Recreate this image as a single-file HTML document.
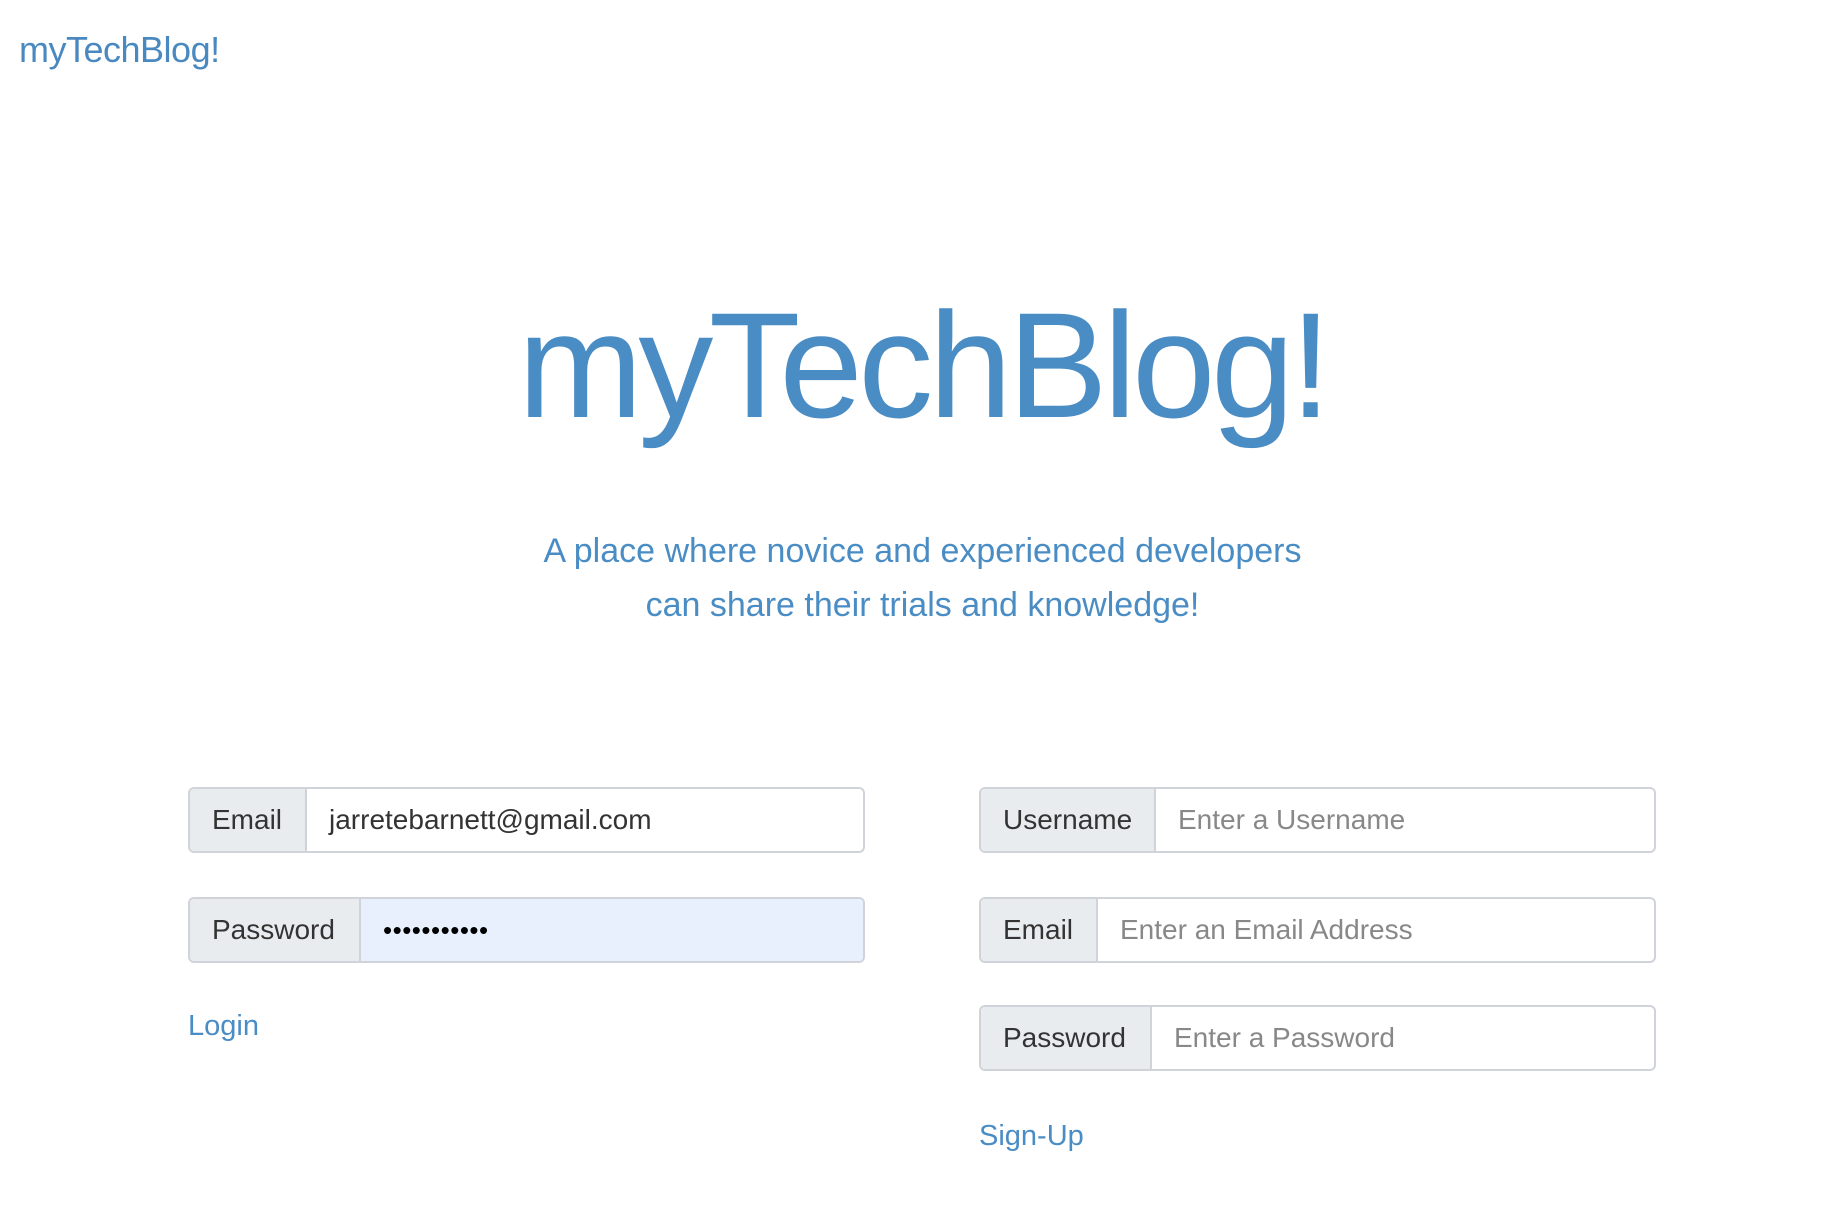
<!DOCTYPE html>
<html><head><meta charset="utf-8"><style>
body{margin:0;width:1845px;height:1215px;background:#fff;font-family:"Liberation Sans",sans-serif;position:relative;overflow:hidden}
.a{position:absolute;white-space:nowrap}
.logo{left:19px;top:29px;font-size:36px;color:#4a89c0;font-weight:normal;letter-spacing:-0.5px}
.title{left:0;width:1845px;text-align:center;top:280px;font-size:150px;line-height:170px;color:#4a8cc4;letter-spacing:-4.5px}
.sub{left:0;width:1845px;text-align:center;top:524px;font-size:34px;line-height:54px;color:#4a8cc4}
.grp{position:absolute;height:62px;border:2px solid #d0d4da;border-radius:6px;display:flex;overflow:hidden;background:#fff}
.ad{background:#e9ecef;border-right:2px solid #d0d4da;font-size:28px;color:#333;line-height:62px;padding-left:22px;box-sizing:border-box}
.in{flex:1;font-size:28px;line-height:62px;padding-left:22px;color:#333}
.ph{color:#888}
.link{font-size:29px;color:#4a8cc4}
</style></head><body>
<div class="a logo">myTechBlog!</div>
<div class="a title">myTechBlog!</div>
<div class="a sub">A place where novice and experienced developers<br>can share their trials and knowledge!</div>

<div class="grp" style="left:188px;top:787px;width:673px"><div class="ad" style="width:117px">Email</div><div class="in">jarretebarnett@gmail.com</div></div>
<div class="grp" style="left:188px;top:897px;width:673px"><div class="ad" style="width:171px">Password</div><div class="in" style="background:#e8f0fe;font-size:26px;letter-spacing:0.5px;color:#000">•••••••••••</div></div>
<div class="a link" style="left:188px;top:1010px">Login</div>

<div class="grp" style="left:979px;top:787px;width:673px"><div class="ad" style="width:175px">Username</div><div class="in ph">Enter a Username</div></div>
<div class="grp" style="left:979px;top:897px;width:673px"><div class="ad" style="width:117px">Email</div><div class="in ph">Enter an Email Address</div></div>
<div class="grp" style="left:979px;top:1005px;width:673px"><div class="ad" style="width:171px">Password</div><div class="in ph">Enter a Password</div></div>
<div class="a link" style="left:979px;top:1120px">Sign-Up</div>
</body></html>
